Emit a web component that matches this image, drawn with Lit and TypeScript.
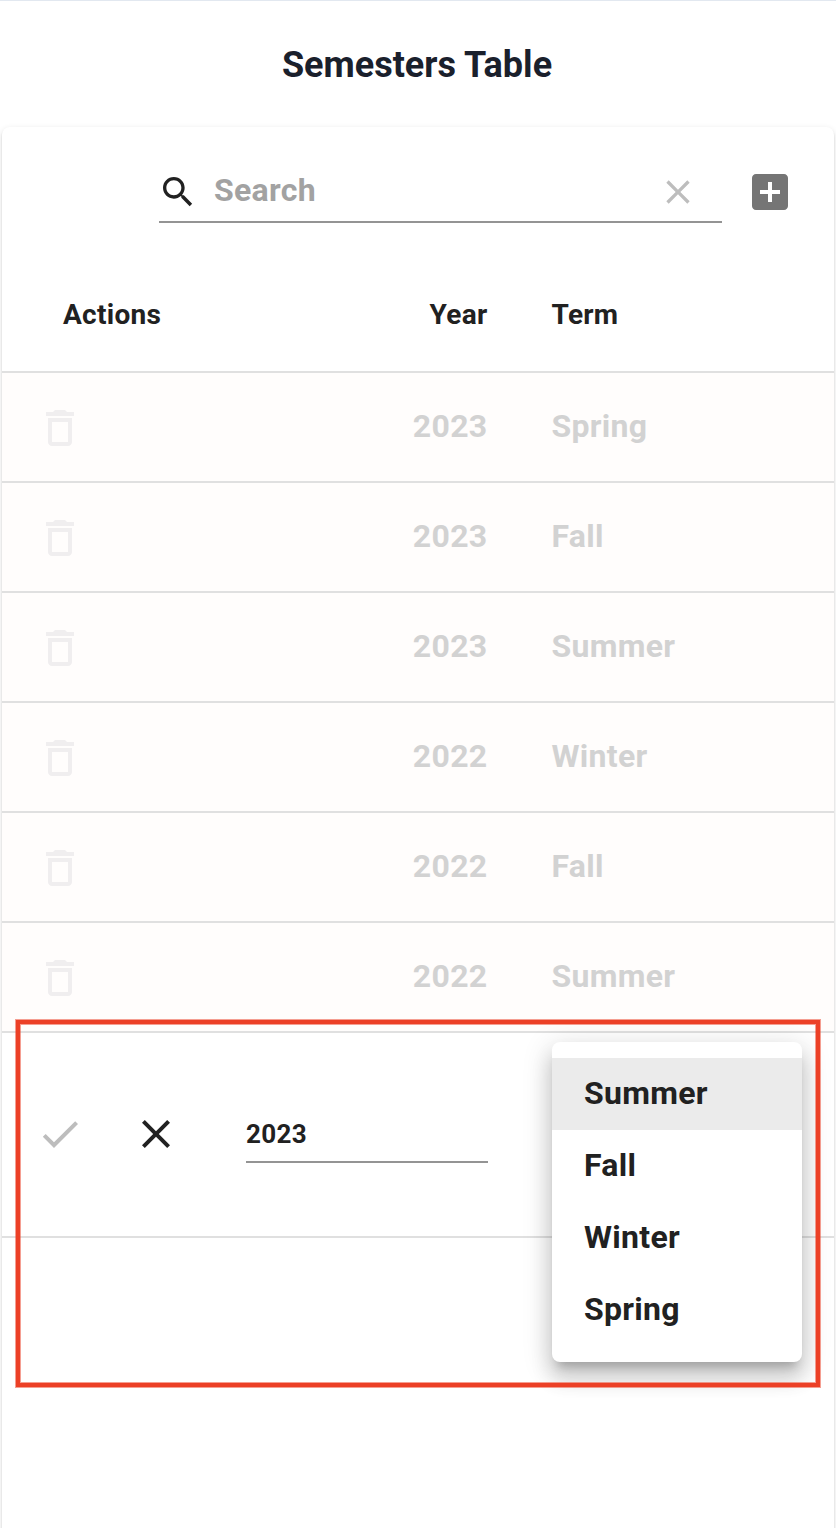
import { LitElement, html, css } from "lit";
import { customElement } from "lit/decorators.js";

const rows = [
  ["2023", "Spring"],
  ["2023", "Fall"],
  ["2023", "Summer"],
  ["2022", "Winter"],
  ["2022", "Fall"],
  ["2022", "Summer"],
];
const terms = ["Summer", "Fall", "Winter", "Spring"];

const icon = (d: string, cls: string) =>
  html`<svg class="icon ${cls}" viewBox="0 0 24 24"><path d=${d} /></svg>`;

const CLOSE =
  "M19 6.41L17.59 5 12 10.59 6.41 5 5 6.41 10.59 12 5 17.59 6.41 19 12 13.41 17.59 19 19 17.59 13.41 12z";
const SEARCH =
  "M15.5 14h-.79l-.28-.27C15.41 12.59 16 11.11 16 9.5 16 5.91 13.09 3 9.5 3S3 5.91 3 9.5 5.91 16 9.5 16c1.61 0 3.09-.59 4.23-1.57l.27.28v.79l5 4.99L20.49 19l-4.99-5zm-6 0C7.01 14 5 11.99 5 9.5S7.01 5 9.5 5 14 7.01 14 9.5 11.99 14 9.5 14z";
const ADD =
  "M19 3H5c-1.11 0-2 .9-2 2v14c0 1.1.89 2 2 2h14c1.1 0 2-.9 2-2V5c0-1.1-.9-2-2-2zm-2 10h-4v4h-2v-4H7v-2h4V7h2v4h4v2z";
const CHECK = "M9 16.17L4.83 12l-1.42 1.41L9 19 21 7l-1.41-1.41z";
const TRASH =
  "M6 19c0 1.1.9 2 2 2h8c1.1 0 2-.9 2-2V7H6v12zM8 9h8v10H8V9zm7.5-5l-1-1h-5l-1 1H5v2h14V4z";

@customElement("app-root")
export class AppRoot extends LitElement {
  static styles = css`
    :host {
      display: block;
      height: 1528px;
      position: relative;
      overflow: hidden;
      box-sizing: border-box;
      border-top: 1px solid #e2e8f0;
      background: #fff;
      font-family: Roboto, sans-serif;
      font-weight: 700;
      color: #212121;
    }
    * { box-sizing: border-box; }
    .title {
      margin: 0;
      height: 126px;
      line-height: 128px;
      text-align: center;
      font-size: 36px;
      color: #1a202c;
      padding-right: 2px;
    }
    .card {
      margin: 0 2px;
      height: 1500px;
      border-radius: 8px;
      box-shadow: 0 4px 2px -2px rgba(0, 0, 0, 0.2), 0 2px 2px rgba(0, 0, 0, 0.14),
        0 2px 6px rgba(0, 0, 0, 0.12);
    }
    .icon { display: block; width: 48px; height: 48px; fill: currentColor; flex: none; }
    .toolbar { display: flex; height: 128px; padding: 32px 40px 0 156.5px; }
    .search {
      display: flex;
      align-items: center;
      width: 563px;
      height: 64px;
      border-bottom: 2px solid #949494;
    }
    .glass { width: 40px; height: 40px; margin: 3px 0 0 -0.5px; }
    .hint { flex: 1; margin-left: 16px; font-size: 32px; letter-spacing: 0.3px; color: #a2a2a2; }
    .clear { width: 40px; height: 40px; margin: 3px 23.5px 0 0; color: #bdbdbd; }
    .add { margin: 9px 0 0 24.5px; color: #757575; }
    .row {
      display: grid;
      grid-template-columns: 228px 321.5px 1fr;
      align-items: center;
      border-bottom: 2px solid #e0e0e0;
      height: 110px;
      font-size: 32px;
      letter-spacing: 0.3px;
    }
    .head { height: 118px; padding-top: 2px; font-size: 28px; }
    .head .actions { padding-left: 61px; }
    .year { text-align: right; padding-right: 64px; }
    .saved { background: #fffdfc; color: #d2d2d2; }
    .saved span { padding-bottom: 2px; }
    .trash { margin: 2px 0 0 34px; color: #f0eeef; }
    .edit { height: 206px; padding-bottom: 2px; margin-top: -1px; border-top: 1px solid transparent; }
    .edit { height: 206px; }
    .buttons { display: flex; gap: 48px; padding-left: 34px; }
    .check { color: #bdbdbd; }
    .input {
      margin: 2px 0 0 16px;
      width: 242px;
      height: 56px;
      line-height: 54px;
      font-size: 26px;
      border-bottom: 2px solid #949494;
    }
    .frame {
      position: absolute;
      left: 16px;
      top: 1019px;
      width: 804px;
      height: 367px;
      border: 4px solid #ec4026;
      box-shadow: 0 0 0 1px rgba(236, 64, 38, 0.5), inset 0 0 0 1px rgba(236, 64, 38, 0.5);
    }
    .menu {
      position: absolute;
      left: 552px;
      top: 1041px;
      width: 250px;
      height: 320px;
      padding: 16px 0;
      border-radius: 8px;
      background: #fff;
      box-shadow: 0 10px 10px -6px rgba(0,0,0,.2), 0 16px 20px 2px rgba(0,0,0,.14), 0 6px 28px 4px rgba(0,0,0,.12);
    }
    .option { height: 72px; line-height: 71px; padding-left: 32px; font-size: 32px; letter-spacing: 0.3px; }
    .selected { background: #ebebeb; }
  `;

  render() {
    return html`
      <h1 class="title">Semesters Table</h1>
      <section class="card">
        <div class="toolbar">
          <div class="search">
            ${icon(SEARCH, "glass")}<span class="hint">Search</span>${icon(CLOSE, "clear")}
          </div>
          ${icon(ADD, "add")}
        </div>
        <div class="row head"><span class="actions">Actions</span><span class="year">Year</span><span>Term</span></div>
        ${rows.map(
          ([year, term]) => html`<div class="row saved">
            ${icon(TRASH, "trash")}<span class="year">${year}</span><span>${term}</span>
          </div>`
        )}
        <div class="row edit">
          <div class="buttons">${icon(CHECK, "check")}${icon(CLOSE, "cancel")}</div>
          <div class="input">2023</div>
        </div>
      </section>
      <div class="menu">
        ${terms.map((t, i) => html`<div class="option ${i === 0 ? "selected" : ""}">${t}</div>`)}
      </div>
      <div class="frame"></div>
    `;
  }
}
